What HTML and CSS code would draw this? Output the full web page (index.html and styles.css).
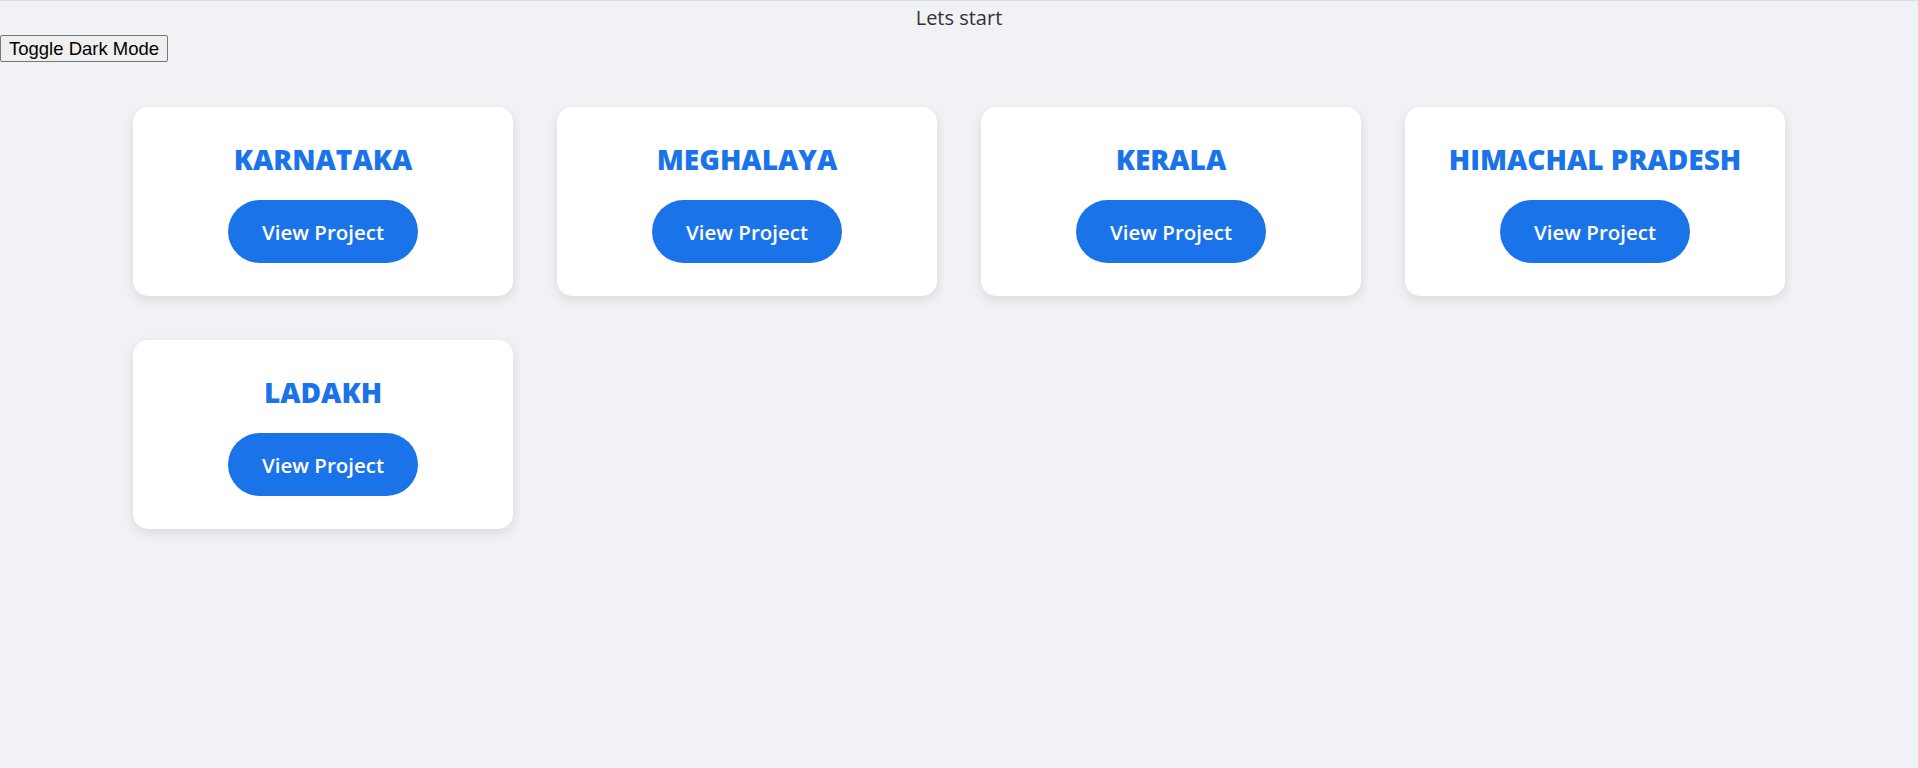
FILE: index.html
```html
<!DOCTYPE html>
<html lang="en">
<head>
<meta charset="utf-8">
<title>Projects</title>
<link rel="stylesheet" href="styles.css">
</head>
<body>
  <header class="top">
    <p class="intro">Lets start</p>
    <button class="toggle" type="button">Toggle Dark Mode</button>
  </header>
  <main class="grid">
    <div class="card"><h2 class="card-title">KARNATAKA</h2><a class="btn" href="#">View Project</a></div>
    <div class="card"><h2 class="card-title">MEGHALAYA</h2><a class="btn" href="#">View Project</a></div>
    <div class="card"><h2 class="card-title">KERALA</h2><a class="btn" href="#">View Project</a></div>
    <div class="card"><h2 class="card-title">HIMACHAL PRADESH</h2><a class="btn" href="#">View Project</a></div>
    <div class="card"><h2 class="card-title">LADAKH</h2><a class="btn" href="#">View Project</a></div>
  </main>
</body>
</html>
```
FILE: styles.css
```css
html, body {
  margin: 0;
  padding: 0;
}
body {
  background: #f0f2f5;
  border-top: 1px solid #dcdde0;
  font-family: "Open Sans", "Liberation Sans", sans-serif;
  color: #333;
  min-height: 767px;
}
.top {
  display: flex;
  flex-direction: column;
  align-items: flex-start;
}
.intro {
  margin: 0;
  width: 100%;
  text-align: center;
  font-size: 20px;
  line-height: 34px;
  color: #333;
}
.toggle {
  font-family: "Liberation Sans", Arial, sans-serif;
  font-size: 18.5px;
  padding: 1px 8px;
  height: 27px;
  background: #efefef;
  border: 1px solid #767676;
  border-radius: 2px;
  color: #000;
}
.grid {
  display: grid;
  grid-template-columns: repeat(4, 380px);
  gap: 44px;
  justify-content: center;
  padding-top: 45px;
}
.card {
  background: #fff;
  border-radius: 15px;
  box-shadow: 0 4px 12px rgba(0, 0, 0, 0.1);
  display: flex;
  flex-direction: column;
  align-items: center;
  padding: 36px 0 33px;
}
.card-title {
  margin: 0 0 24px;
  font-size: 28px;
  line-height: 33px;
  font-weight: 800;
  color: #1a73e8;
}
.btn {
  display: inline-block;
  background: #1a73e8;
  color: #fff;
  text-decoration: none;
  font-size: 20.5px;
  font-weight: 600;
  line-height: 27px;
  padding: 19px 34px 17px;
  border-radius: 32px;
}
```
